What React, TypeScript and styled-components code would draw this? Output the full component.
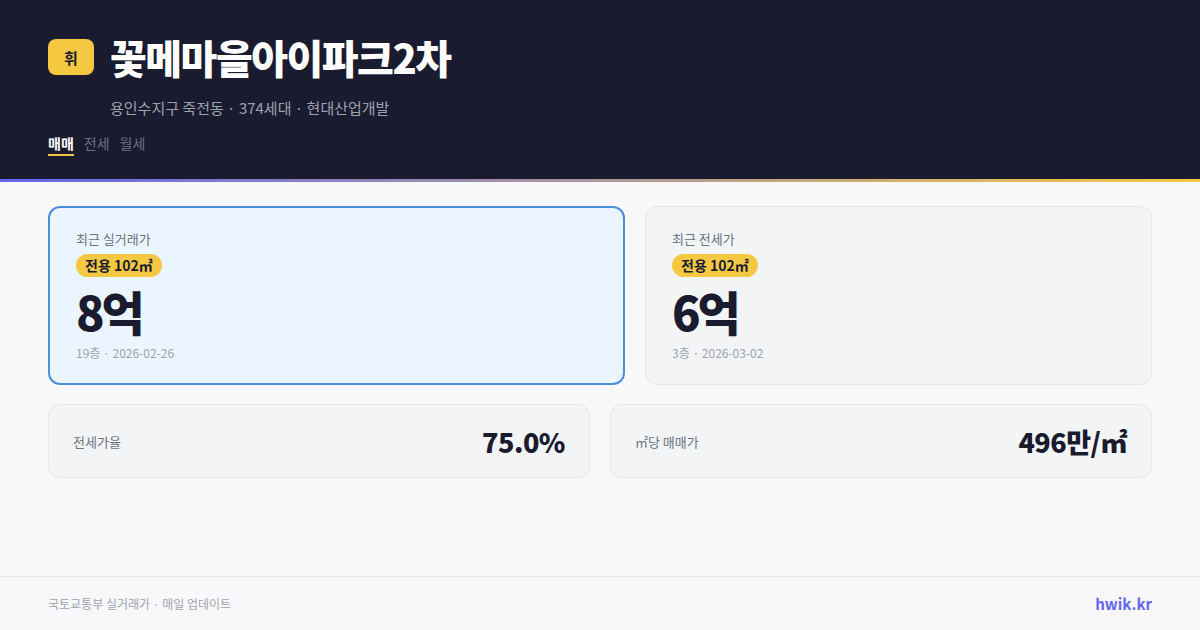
import styled, { createGlobalStyle } from 'styled-components';

const GlobalStyle = createGlobalStyle`
  * { box-sizing: border-box; }
  html, body { margin: 0; padding: 0; }
  body {
    background: #f8f8fa;
    font-family: "Noto Sans CJK KR", "Noto Sans", sans-serif;
  }
`;

const Page = styled.div`
  width: 1200px;
  height: 630px;
  display: flex;
  flex-direction: column;
  background: #f8f8fa;
`;

const Header = styled.header`
  background: #1a1b2e;
  padding: 34px 48px 23px;
  border-bottom: 3px solid transparent;
  border-image: linear-gradient(90deg, #6366f1, #f5c842) 1;
`;

const TitleRow = styled.div`
  display: flex;
  align-items: center;
  gap: 16px;
  height: 46px;
`;

const Badge = styled.div`
  width: 46px;
  height: 36px;
  border-radius: 8px;
  background: #f5c842;
  color: #1a1b2e;
  font-size: 15px;
  font-weight: 700;
  display: flex;
  align-items: center;
  justify-content: center;
`;

const Title = styled.h1`
  margin: 0;
  color: #ffffff;
  font-size: 40px;
  font-weight: 800;
  letter-spacing: -1.5px;
  line-height: 46px;
`;

const Sub = styled.div`
  margin: 17px 0 0 62px;
  color: #9ca3af;
  font-size: 15px;
  line-height: 21px;
`;

const Tabs = styled.nav`
  display: flex;
  gap: 10px;
  margin-top: 16px;
`;

const Tab = styled.span<{ $active?: boolean }>`
  font-size: 14px;
  line-height: 19px;
  font-weight: ${p => (p.$active ? 700 : 400)};
  color: ${p => (p.$active ? '#ffffff' : '#6b7280')};
  padding-bottom: 1px;
  border-bottom: 2px solid ${p => (p.$active ? '#f5c842' : 'transparent')};
`;

const Main = styled.main`
  flex: 1;
  padding: 24px 48px 0;
  display: flex;
  flex-direction: column;
  gap: 19px;
`;

const TopRow = styled.div`
  display: grid;
  grid-template-columns: 577px 1fr;
  gap: 20px;
`;

const PriceCard = styled.div<{ $highlight?: boolean }>`
  height: 179px;
  border-radius: 12px;
  border: ${p => (p.$highlight ? '2px solid #4a90d9' : '1px solid #e5e7eb')};
  background: ${p => (p.$highlight ? '#ebf5ff' : '#f3f4f6')};
  padding: ${p => (p.$highlight ? '22px 26px 0' : '23px 26px 0')};
  display: flex;
  flex-direction: column;
  align-items: flex-start;
`;

const CardLabel = styled.div`
  font-size: 13px;
  line-height: 18px;
  color: #6b7280;
`;

const Pill = styled.span`
  margin-top: 6px;
  background: #f5c842;
  color: #1a1b2e;
  font-size: 14px;
  font-weight: 700;
  line-height: 23px;
  padding: 0 9px;
  border-radius: 12px;
`;

const BigPrice = styled.div`
  margin-top: 10px;
  font-size: 47px;
  line-height: 48px;
  font-weight: 800;
  letter-spacing: -3px;
  color: #1a1b2e;
`;

const Meta = styled.div`
  margin-top: 10px;
  font-size: 12px;
  line-height: 16px;
  color: #9ca3af;
`;

const BottomRow = styled.div`
  display: grid;
  grid-template-columns: 1fr 1fr;
  gap: 20px;
`;

const StatCard = styled.div`
  height: 74px;
  border-radius: 12px;
  border: 1px solid #e5e7eb;
  background: #f3f4f6;
  padding: 0 24px;
  display: flex;
  align-items: center;
  justify-content: space-between;
`;

const StatLabel = styled.span`
  font-size: 13px;
  color: #6b7280;
`;

const StatValue = styled.span`
  font-size: 27px;
  font-weight: 800;
  letter-spacing: -0.5px;
  color: #1a1b2e;
`;

const Footer = styled.footer`
  height: 54px;
  border-top: 1px solid #e5e7eb;
  padding: 0 48px;
  display: flex;
  align-items: center;
  justify-content: space-between;
`;

const Source = styled.span`
  font-size: 12px;
  color: #9ca3af;
`;

const Brand = styled.span`
  font-size: 15px;
  font-weight: 700;
  color: #6366f1;
`;

export default function App() {
  return (
    <Page>
      <GlobalStyle />
      <Header>
        <TitleRow>
          <Badge>휘</Badge>
          <Title>꽃메마을아이파크2차</Title>
        </TitleRow>
        <Sub>용인수지구 죽전동 · 374세대 · 현대산업개발</Sub>
        <Tabs>
          <Tab $active>매매</Tab>
          <Tab>전세</Tab>
          <Tab>월세</Tab>
        </Tabs>
      </Header>

      <Main>
        <TopRow>
          <PriceCard $highlight>
            <CardLabel>최근 실거래가</CardLabel>
            <Pill>전용 102㎡</Pill>
            <BigPrice>8억</BigPrice>
            <Meta>19층 · 2026-02-26</Meta>
          </PriceCard>
          <PriceCard>
            <CardLabel>최근 전세가</CardLabel>
            <Pill>전용 102㎡</Pill>
            <BigPrice>6억</BigPrice>
            <Meta>3층 · 2026-03-02</Meta>
          </PriceCard>
        </TopRow>

        <BottomRow>
          <StatCard>
            <StatLabel>전세가율</StatLabel>
            <StatValue>75.0%</StatValue>
          </StatCard>
          <StatCard>
            <StatLabel>㎡당 매매가</StatLabel>
            <StatValue>496만/㎡</StatValue>
          </StatCard>
        </BottomRow>
      </Main>

      <Footer>
        <Source>국토교통부 실거래가 · 매일 업데이트</Source>
        <Brand>hwik.kr</Brand>
      </Footer>
    </Page>
  );
}
